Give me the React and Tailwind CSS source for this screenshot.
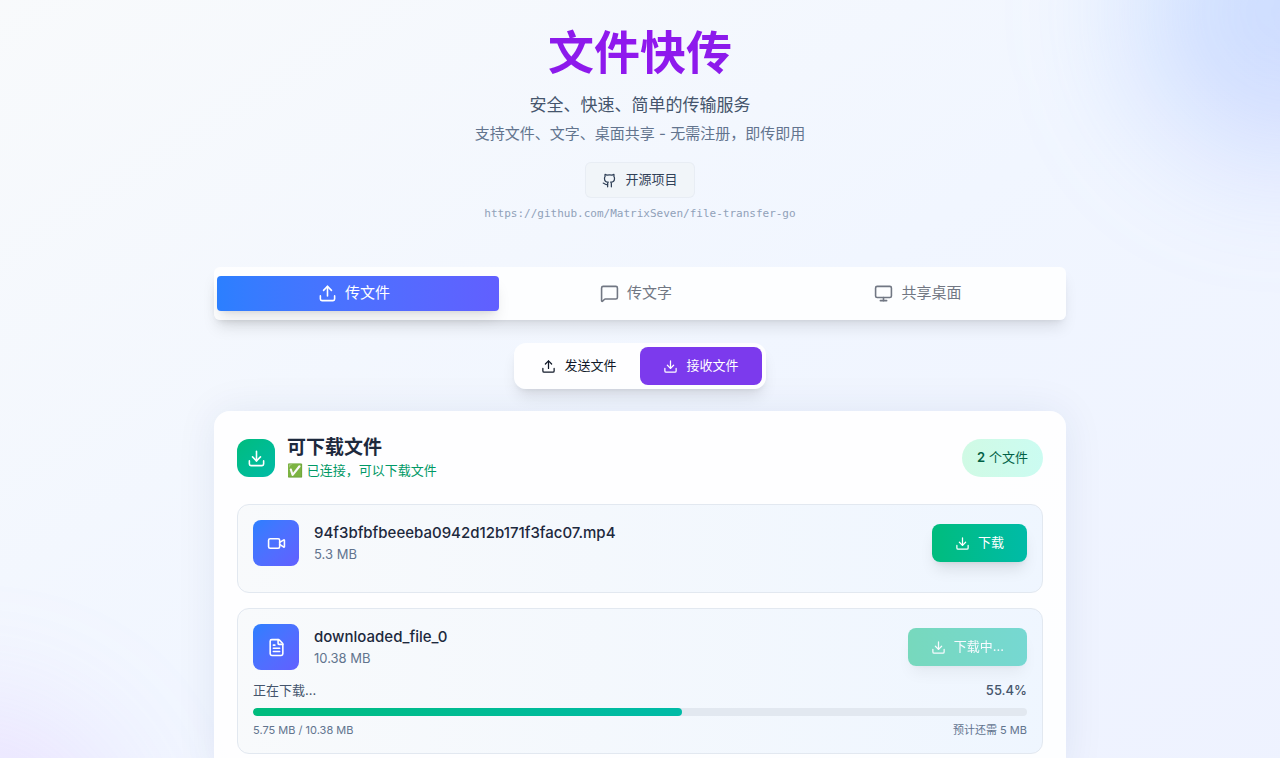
import { useState } from "react";
import {
  Download,
  FileText,
  Github,
  MessageSquare,
  Monitor,
  Upload,
  Video,
} from "lucide-react";

const tabs = [
  { id: "file", label: "传文件", icon: Upload },
  { id: "text", label: "传文字", icon: MessageSquare },
  { id: "desktop", label: "共享桌面", icon: Monitor },
];

const modes = [
  { id: "send", label: "发送文件", icon: Upload },
  { id: "receive", label: "接收文件", icon: Download },
];

const files = [
  {
    name: "94f3bfbfbeeeba0942d12b171f3fac07.mp4",
    size: "5.3 MB",
    icon: Video,
  },
  {
    name: "downloaded_file_0",
    size: "10.38 MB",
    icon: FileText,
    progress: 55.4,
    received: "5.75 MB",
    remaining: "5 MB",
  },
];

const Hero = () => (
  <header className="flex flex-col items-center text-center">
    <h1 className="bg-gradient-to-r from-[#7c22e0] via-[#9018ee] to-[#7c22e0] bg-clip-text w-full text-[46px] leading-[58px] font-bold text-transparent">
      文件快传
    </h1>
    <p className="mt-[11px] text-[17px] leading-[26px] text-slate-600">
      安全、快速、简单的传输服务
    </p>
    <p className="mt-1 text-[15px] leading-6 text-slate-500">
      支持文件、文字、桌面共享 - 无需注册，即传即用
    </p>
    <a
      href="https://github.com/MatrixSeven/file-transfer-go"
      className="mt-4 flex h-9 items-center gap-2 rounded-md border border-slate-200/60 bg-slate-100 px-4 text-[13px] text-slate-700"
    >
      <Github size={15} />
      开源项目
    </a>
    <a
      href="https://github.com/MatrixSeven/file-transfer-go"
      className="mt-2 font-['DejaVu_Sans_Mono','Noto_Sans_CJK_SC',monospace] text-[11px] leading-4 text-slate-400"
    >
      https://github.com/MatrixSeven/file-transfer-go
    </a>
  </header>
);

const Tabs = ({ active, onChange }) => (
  <nav className="mt-[45px] grid grid-cols-3 rounded-md bg-white/85 px-[3px] py-[9px] shadow-lg">
    {tabs.map(({ id, label, icon: Icon }) => (
      <button
        key={id}
        type="button"
        onClick={() => onChange(id)}
        className={
          active === id
            ? "flex h-[35px] items-center justify-center gap-2 rounded bg-gradient-to-r from-[#2b7fff] to-[#615fff] pr-2 text-[15px] text-white shadow-lg"
            : "flex h-[35px] items-center justify-center gap-2 rounded pr-2 text-[15px] text-[#717783]"
        }
      >
        <Icon size={19} />
        {label}
      </button>
    ))}
  </nav>
);

const ModeSwitch = ({ active, onChange }) => (
  <div className="mt-[23px] flex justify-center">
    <div className="flex rounded-xl bg-white/90 p-1 shadow-lg">
      {modes.map(({ id, label, icon: Icon }) => (
        <button
          key={id}
          type="button"
          onClick={() => onChange(id)}
          className={
            active === id
              ? "flex h-[38px] w-[122px] items-center justify-center gap-2 rounded-lg bg-[#7c3aed] text-[13px] text-white"
              : "flex h-[38px] w-[122px] items-center justify-center gap-2 rounded-lg text-[13px] text-gray-900"
          }
        >
          <Icon size={15} />
          {label}
        </button>
      ))}
    </div>
  </div>
);

const FileItem = ({ file }) => {
  const Icon = file.icon;
  const downloading = file.progress !== undefined;

  return (
    <li className="rounded-xl border border-slate-200 bg-gradient-to-r from-slate-50 to-blue-50 p-[15px]">
      <div className="mb-[11px] flex items-center gap-[15px]">
        <div className="flex size-[46px] shrink-0 items-center justify-center rounded-lg bg-gradient-to-br from-[#2b7fff] to-[#615fff] text-white">
          <Icon size={19} />
        </div>
        <div className="min-w-0 flex-1">
          <h4 className="truncate text-[15px] leading-[22px] font-medium text-slate-800">
            {file.name}
          </h4>
          <p className="text-[13px] leading-5 text-slate-500">{file.size}</p>
        </div>
        <button
          type="button"
          disabled={downloading}
          className="flex h-[38px] items-center gap-2 rounded-lg bg-gradient-to-r from-[#00bc7d] to-[#00bba7] px-[23px] text-[13px] text-white shadow-lg disabled:opacity-50"
        >
          <Download size={15} />
          {downloading ? "下载中..." : "下载"}
        </button>
      </div>

      {downloading && (
        <div>
          <div className="flex justify-between text-[13px] leading-[19px] text-slate-600">
            <span>正在下载...</span>
            <span className="font-medium">{file.progress}%</span>
          </div>
          <div className="mt-2 h-2 overflow-hidden rounded-full bg-slate-200">
            <div
              className="h-full rounded-full bg-gradient-to-r from-[#00bc7d] to-[#00bba7]"
              style={{ width: `${file.progress}%` }}
            />
          </div>
          <div className="mt-[7px] flex justify-between text-[11px] leading-[15px] text-slate-500">
            <span>
              {file.received} / {file.size}
            </span>
            <span>预计还需 {file.remaining}</span>
          </div>
        </div>
      )}
    </li>
  );
};

const ReceivePanel = () => (
  <section className="mt-[22px] rounded-2xl bg-white/90 p-[23px] shadow-[0_0_40px_rgba(30,50,110,0.08)]">
    <div className="mb-[22px] flex min-h-12 items-center justify-between">
      <div className="flex items-center gap-3">
        <div className="flex size-[38px] items-center justify-center rounded-xl bg-gradient-to-br from-[#00bc7d] to-[#00bba7] text-white">
          <Download size={19} />
        </div>
        <div>
          <h3 className="text-[19px] leading-6 font-semibold text-slate-800">
            可下载文件
          </h3>
          <p className="text-[13px] leading-5 text-[#009966]">
            ✅ 已连接，可以下载文件
          </p>
        </div>
      </div>
      <div className="flex h-[38px] items-center gap-1 rounded-full bg-gradient-to-r from-emerald-100 to-teal-100 px-[15px] text-[13px] text-emerald-800">
        <span className="font-semibold">{files.length}</span>
        <span>个文件</span>
      </div>
    </div>

    <ul className="flex flex-col gap-[15px]">
      {files.map((file) => (
        <FileItem key={file.name} file={file} />
      ))}
    </ul>
  </section>
);

const App = () => {
  const [tab, setTab] = useState("file");
  const [mode, setMode] = useState("receive");

  return (
    <div className="relative min-h-screen overflow-hidden bg-gradient-to-br from-slate-50 via-[#f1f6ff] to-indigo-50 font-[Inter,'Noto_Sans_CJK_SC',sans-serif]">
      {/* Background glow */}
      <div className="pointer-events-none absolute -top-[140px] -right-[160px] size-[304px] rounded-full bg-gradient-to-br from-blue-400/25 to-indigo-400/25 blur-3xl" />
      <div className="pointer-events-none absolute -bottom-[200px] -left-[180px] size-[304px] rounded-full bg-purple-400/15 blur-3xl" />

      <main className="relative mx-auto w-full max-w-[884px] px-4 pt-[23px] pb-8">
        <Hero />
        <Tabs active={tab} onChange={setTab} />
        <ModeSwitch active={mode} onChange={setMode} />
        <ReceivePanel />
      </main>
    </div>
  );
};

export default App;
